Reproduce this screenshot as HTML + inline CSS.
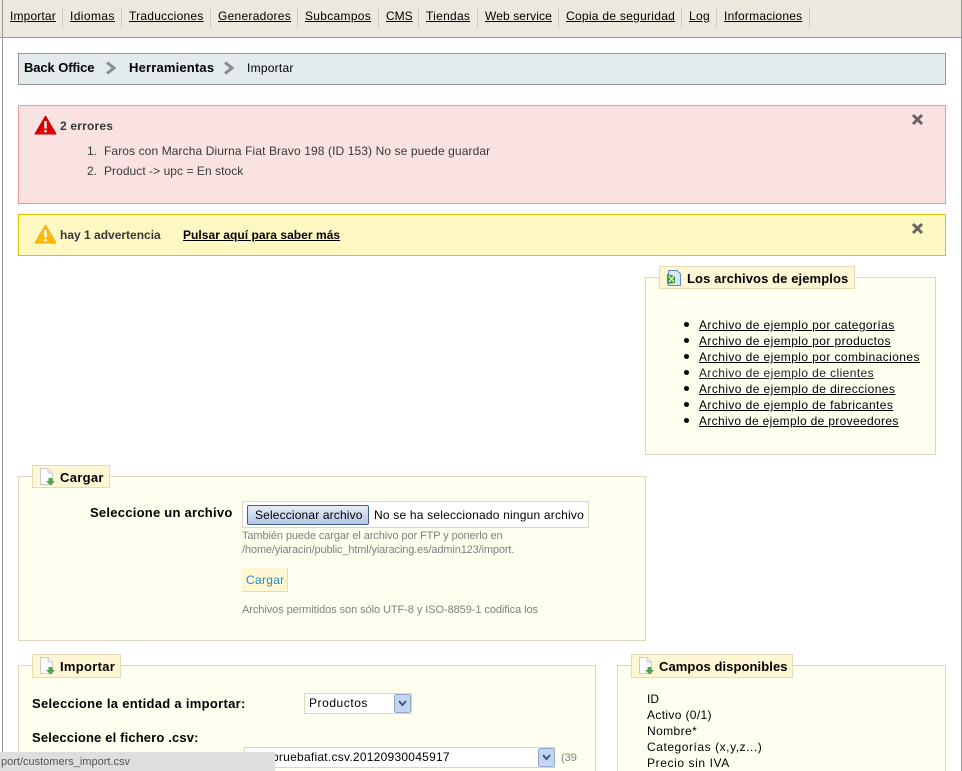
<!DOCTYPE html>
<html lang="es"><head><meta charset="utf-8"><title>Importar</title>
<style>
html,body{margin:0;padding:0;background:#fff;width:962px;height:771px;overflow:hidden}
body{font-family:"Liberation Sans",sans-serif;font-size:12px;color:#000}
#w{position:absolute;left:0;top:0;width:962px;height:771px;overflow:hidden}
.t{position:absolute;white-space:nowrap;line-height:16px}
.b{position:absolute;box-sizing:border-box}
.u{text-decoration:underline}
.bd{font-weight:bold}
.sep{position:absolute;top:8px;height:20px;width:1px;background:#ccc}
.fs{position:absolute;box-sizing:border-box;background:#ffffef;border:1px solid #dfd5c3}
.lg{position:absolute;box-sizing:border-box;background:#fff6d3;border:1px solid #e6dbb8}
.h{font-size:13px;font-weight:bold}
.g{color:#7f7f7f;font-size:11px}
.l{letter-spacing:.41px}
svg{position:absolute}
</style></head><body><div id="w">
<div class="b" style="left:0;top:0;width:962px;height:38px;background:#ebe9dd;border-bottom:1px solid #999"></div>
<div class="b" style="left:2px;top:0;width:1px;height:771px;background:#999"></div>
<div class="b" style="left:961px;top:0;width:1px;height:771px;background:#999"></div>
<span class="t u" style="left:10px;top:8px;letter-spacing:.15px">Importar</span><i class="sep" style="left:62px"></i>
<span class="t u" style="left:70px;top:8px;letter-spacing:.4px">Idiomas</span><i class="sep" style="left:121px"></i>
<span class="t u" style="left:129px;top:8px;letter-spacing:.25px">Traducciones</span><i class="sep" style="left:210px"></i>
<span class="t u" style="left:218px;top:8px;letter-spacing:.27px">Generadores</span><i class="sep" style="left:297px"></i>
<span class="t u" style="left:305px;top:8px;letter-spacing:.3px">Subcampos</span><i class="sep" style="left:378px"></i>
<span class="t u" style="left:386px;top:8px">CMS</span><i class="sep" style="left:418px"></i>
<span class="t u" style="left:426px;top:8px;letter-spacing:.28px">Tiendas</span><i class="sep" style="left:477px"></i>
<span class="t u" style="left:485px;top:8px;letter-spacing:.1px">Web service</span><i class="sep" style="left:558px"></i>
<span class="t u" style="left:566px;top:8px;letter-spacing:.28px">Copia de seguridad</span><i class="sep" style="left:681px"></i>
<span class="t u" style="left:689px;top:8px;letter-spacing:.3px">Log</span><i class="sep" style="left:716px"></i>
<span class="t u" style="left:724px;top:8px;letter-spacing:.23px">Informaciones</span><i class="sep" style="left:809px"></i>

<div class="b" style="left:18px;top:53px;width:928px;height:32px;background:#e2eaec;border:1px solid #999"></div>
<span class="t bd" style="left:24px;top:60px;font-size:13px;letter-spacing:-.1px">Back Office</span>
<svg style="left:105px;top:61px" width="12" height="14" viewBox="0 0 12 14"><path d="M2 1.5 L9 7 L2 12.5" fill="none" stroke="#8a8a8a" stroke-width="3"/></svg>
<span class="t bd" style="left:129px;top:60px;font-size:13px;letter-spacing:.18px">Herramientas</span>
<svg style="left:223px;top:61px" width="12" height="14" viewBox="0 0 12 14"><path d="M2 1.5 L9 7 L2 12.5" fill="none" stroke="#8a8a8a" stroke-width="3"/></svg>
<span class="t" style="left:247px;top:60px;letter-spacing:.25px">Importar</span>

<div class="b" style="left:18px;top:105px;width:928px;height:99px;background:#fae2e3;border:1px solid #ec9b9b"></div>
<svg style="left:34px;top:115px" width="23" height="20" viewBox="0 0 23 20"><path d="M11.5 1 L22 19 H1 Z" fill="#e00000" stroke="#c80000" stroke-width="1" stroke-linejoin="round"/><rect x="10.3" y="6" width="2.4" height="7.5" fill="#fff"/><rect x="10.3" y="15" width="2.4" height="2.4" fill="#fff"/></svg>
<span class="t bd" style="left:60px;top:118px;color:#383838;letter-spacing:.2px">2 errores</span>
<span class="t" style="left:87px;top:143px;color:#383838">1.</span>
<span class="t" style="left:104px;top:143px;color:#383838;letter-spacing:.1px">Faros con Marcha Diurna Fiat Bravo 198 (ID 153) No se puede guardar</span>
<span class="t" style="left:87px;top:163px;color:#383838">2.</span>
<span class="t" style="left:104px;top:163px;color:#383838;letter-spacing:.05px">Product -&gt; upc = En stock</span>
<svg style="left:911px;top:113px" width="13" height="13" viewBox="0 0 13 13"><path d="M2 2 L11 11 M11 2 L2 11" stroke="#666" stroke-width="3"/></svg>

<div class="b" style="left:18px;top:214px;width:928px;height:42px;background:#fef8c3;border:1px solid #d8c400"></div>
<svg style="left:34px;top:224px" width="23" height="20" viewBox="0 0 23 20"><path d="M11.5 1 L22 19 H1 Z" fill="#ffb80c" stroke="#f5ac00" stroke-width="1" stroke-linejoin="round"/><rect x="10.3" y="6" width="2.4" height="7.5" fill="#fff"/><rect x="10.3" y="15" width="2.4" height="2.4" fill="#fff"/></svg>
<span class="t bd" style="left:60px;top:227px;color:#383838">hay 1 advertencia</span>
<span class="t bd u" style="left:183px;top:227px;letter-spacing:.04px">Pulsar aquí para saber más</span>
<svg style="left:911px;top:222px" width="13" height="13" viewBox="0 0 13 13"><path d="M2 2 L11 11 M11 2 L2 11" stroke="#666" stroke-width="3"/></svg>

<div class="fs" style="left:645px;top:277px;width:291px;height:178px"></div>
<div class="lg" style="left:659px;top:266px;width:196px;height:23px"></div>
<svg style="left:666px;top:270px" width="16" height="16" viewBox="0 0 16 16"><path d="M2.5 .5 H11 L14.5 4 V15.5 H2.5 Z" fill="#d8e8f8" stroke="#5a8cc8"/><path d="M1 4 L9 6 V13 L1 14 Z" fill="#3f9a3f"/><path d="M3 6 L8 12 M8 6 L3 12" stroke="#e8f5e0" stroke-width="1.3"/></svg>
<span class="t h" style="left:687px;top:271px;letter-spacing:.1px">Los archivos de ejemplos</span>
<i class="b" style="left:684px;top:322px;width:5px;height:5px;border-radius:50%;background:#000"></i><span class="t u l" style="left:699px;top:317px">Archivo de ejemplo por categorías</span>
<i class="b" style="left:684px;top:338px;width:5px;height:5px;border-radius:50%;background:#000"></i><span class="t u l" style="left:699px;top:333px">Archivo de ejemplo por productos</span>
<i class="b" style="left:684px;top:354px;width:5px;height:5px;border-radius:50%;background:#000"></i><span class="t u l" style="left:699px;top:349px">Archivo de ejemplo por combinaciones</span>
<i class="b" style="left:684px;top:370px;width:5px;height:5px;border-radius:50%;background:#000"></i><span class="t u l" style="left:699px;top:365px;color:#222">Archivo de ejemplo de clientes</span>
<i class="b" style="left:684px;top:386px;width:5px;height:5px;border-radius:50%;background:#000"></i><span class="t u l" style="left:699px;top:381px">Archivo de ejemplo de direcciones</span>
<i class="b" style="left:684px;top:402px;width:5px;height:5px;border-radius:50%;background:#000"></i><span class="t u l" style="left:699px;top:397px">Archivo de ejemplo de fabricantes</span>
<i class="b" style="left:684px;top:418px;width:5px;height:5px;border-radius:50%;background:#000"></i><span class="t u" style="left:699px;top:413px;letter-spacing:.33px">Archivo de ejemplo de proveedores</span>

<div class="fs" style="left:18px;top:476px;width:628px;height:165px"></div>
<div class="lg" style="left:32px;top:465px;width:78px;height:23px"></div>
<svg style="left:39px;top:468px" width="17" height="18" viewBox="0 0 17 18"><path d="M1.5 .5 H9 L13.5 5 V16.5 H1.5 Z" fill="#fff" stroke="#c8ccd0"/><path d="M9 .5 V5 H13.5" fill="#eee" stroke="#c8ccd0"/><path d="M9.5 10 H13.5 V13 H16 L11.5 17.5 L7 13 H9.5 Z" fill="#4fa44f"/></svg>
<span class="t h" style="left:60px;top:470px;letter-spacing:.3px">Cargar</span>
<span class="t h" style="left:90px;top:505px;letter-spacing:.25px">Seleccione un archivo</span>
<div class="b" style="left:242px;top:501px;width:347px;height:27px;background:#fff;border:1px solid #dfd5c3"></div>
<div class="b" style="left:247px;top:505px;width:122px;height:20px;background:linear-gradient(#e6edf8,#b4c6e6);border:1px solid #3c5d8c;border-radius:2px"></div>
<span class="t" style="left:255px;top:507px;letter-spacing:.15px">Seleccionar archivo</span>
<span class="t" style="left:374px;top:507px;letter-spacing:.2px">No se ha seleccionado ningun archivo</span>
<span class="t g" style="left:242px;top:528px;letter-spacing:-.1px">También puede cargar el archivo por FTP y ponerlo en</span>
<span class="t g" style="left:242px;top:542px;letter-spacing:-.14px">/home/yiaracin/public_html/yiaracing.es/admin123/import.</span>
<div class="b" style="left:242px;top:568px;width:46px;height:24px;background:#fff6d3;border-right:1px solid #e6dbb8;border-bottom:1px solid #e6dbb8"></div>
<span class="t" style="left:246px;top:572px;color:#268ccd;letter-spacing:.3px">Cargar</span>
<span class="t g" style="left:242px;top:602px;letter-spacing:-.07px">Archivos permitidos son sólo UTF-8 y ISO-8859-1 codifica los</span>

<div class="fs" style="left:18px;top:665px;width:578px;height:120px"></div>
<div class="lg" style="left:32px;top:654px;width:89px;height:24px"></div>
<svg style="left:39px;top:657px" width="17" height="18" viewBox="0 0 17 18"><path d="M1.5 .5 H9 L13.5 5 V16.5 H1.5 Z" fill="#fff" stroke="#c8ccd0"/><path d="M9 .5 V5 H13.5" fill="#eee" stroke="#c8ccd0"/><path d="M9.5 10 H13.5 V13 H16 L11.5 17.5 L7 13 H9.5 Z" fill="#4fa44f"/></svg>
<span class="t h" style="left:60px;top:659px;letter-spacing:.3px">Importar</span>
<span class="t h" style="left:32px;top:696px;letter-spacing:.3px">Seleccione la entidad a importar:</span>
<div class="b" style="left:304px;top:693px;width:108px;height:21px;background:#fff;border:1px solid #dfd5c3"></div>
<span class="t" style="left:309px;top:695px;letter-spacing:.55px">Productos</span>
<svg style="left:394px;top:694px" width="17" height="19" viewBox="0 0 17 19"><rect x=".5" y=".5" width="16" height="18" rx="2" fill="#c5d5f0" stroke="#8ea8d0"/><path d="M5 7 L8.5 11 L12 7" fill="none" stroke="#3a5a8c" stroke-width="2"/></svg>
<span class="t h" style="left:32px;top:730px;letter-spacing:.15px">Seleccione el fichero .csv:</span>
<div class="b" style="left:244px;top:747px;width:311px;height:21px;background:#fff;border:1px solid #dfd5c3"></div>
<span class="t" style="left:272px;top:749px;letter-spacing:.25px">pruebafiat.csv.20120930045917</span>
<svg style="left:538px;top:748px" width="17" height="19" viewBox="0 0 17 19"><rect x=".5" y=".5" width="16" height="18" rx="2" fill="#c5d5f0" stroke="#8ea8d0"/><path d="M5 7 L8.5 11 L12 7" fill="none" stroke="#3a5a8c" stroke-width="2"/></svg>
<span class="t g" style="left:561px;top:750px">(39</span>

<div class="fs" style="left:617px;top:665px;width:329px;height:120px"></div>
<div class="lg" style="left:631px;top:654px;width:162px;height:24px"></div>
<svg style="left:638px;top:657px" width="17" height="18" viewBox="0 0 17 18"><path d="M1.5 .5 H9 L13.5 5 V16.5 H1.5 Z" fill="#fff" stroke="#c8ccd0"/><path d="M9 .5 V5 H13.5" fill="#eee" stroke="#c8ccd0"/><path d="M9.5 10 H13.5 V13 H16 L11.5 17.5 L7 13 H9.5 Z" fill="#4fa44f"/></svg>
<span class="t h" style="left:659px;top:659px;letter-spacing:.08px">Campos disponibles</span>
<span class="t" style="left:647px;top:691px">ID</span>
<span class="t" style="left:647px;top:707px;letter-spacing:.35px">Activo (0/1)</span>
<span class="t" style="left:647px;top:723px;letter-spacing:.4px">Nombre*</span>
<span class="t" style="left:647px;top:739px;letter-spacing:.55px">Categorías (x,y,z...)</span>
<span class="t" style="left:647px;top:755px;letter-spacing:.6px">Precio sin IVA</span>

<div class="b" style="left:0;top:752px;width:275px;height:19px;background:#dedede"></div>
<span class="t" style="left:1px;top:754px;font-size:11px;color:#555">port/customers_import.csv</span>
</div></body></html>
